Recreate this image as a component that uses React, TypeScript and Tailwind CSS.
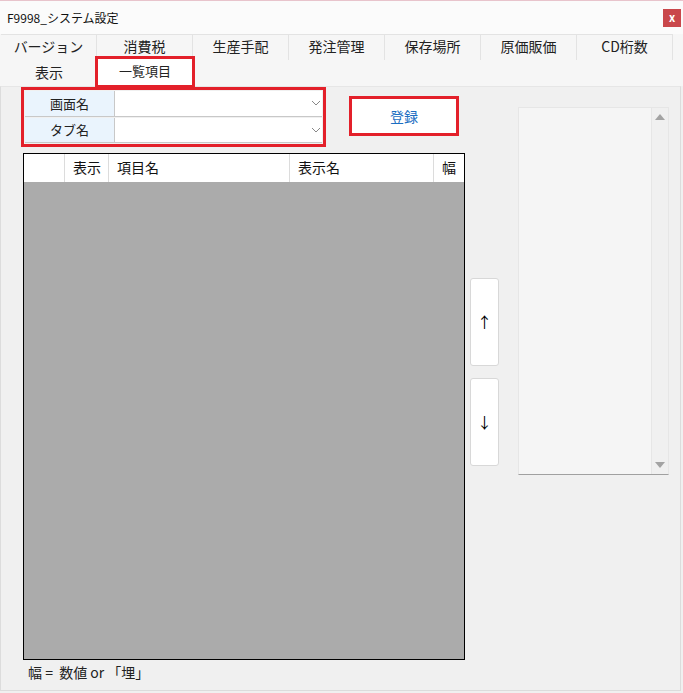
const font = { fontFamily: '"Noto Sans CJK JP", "Noto Sans", sans-serif' };

const tabsTop = ["バージョン", "消費税", "生産手配", "発注管理", "保存場所", "原価販価", "CD桁数"];

const columns = [
  { label: "", w: "w-[41px]" },
  { label: "表示", w: "w-[44px]" },
  { label: "項目名", w: "w-[181px]" },
  { label: "表示名", w: "w-[144px]" },
  { label: "幅", w: "flex-1" },
];

function Combo({ label }: { label: string }) {
  return (
    <div className="flex h-[26px]">
      <div className="w-[90px] bg-[#eaf4fd] border-r border-b border-[#c8c8c8] flex items-center justify-center text-[13px] text-[#222]">
        {label}
      </div>
      <div className="flex-1 bg-white border-b border-[#c8c8c8] flex items-center justify-end pr-[1px]">
        <svg width="10" height="6" viewBox="0 0 10 6">
          <path d="M1 1 L5 5 L9 1" fill="none" stroke="#888" strokeWidth="1" />
        </svg>
      </div>
    </div>
  );
}

function ArrowButton({ ch }: { ch: string }) {
  return (
    <div className="w-[29px] h-[88px] bg-white border border-[#d8d8d8] rounded-[3px] flex items-center justify-center text-[15px] text-black">
      {ch}
    </div>
  );
}

export default function App() {
  return (
    <div className="w-[683px] h-[693px] bg-[#f0f0f0] overflow-hidden" style={font}>
      {/* title bar */}
      <div className="h-[34px] bg-[#fbfbfb] border-t border-[#e8c4cc] flex items-center justify-between pl-[7px] pr-[2px]">
        <span className="text-[12px] text-[#111]">F9998_システム設定</span>
        <div className="w-[18px] h-[18px] bg-[#c9474b] text-white text-[11px] font-bold flex items-center justify-center leading-none">
          x
        </div>
      </div>

      {/* tabs */}
      <div className="bg-[#f6f6f6] pl-[1px]">
        <div className="flex h-[26px]">
          {tabsTop.map((t) => (
            <div
              key={t}
              className="w-[96px] border-r border-t border-[#e3e3e3] flex items-center justify-center text-[14px] text-[#222] pb-[2px]"
            >
              {t}
            </div>
          ))}
        </div>
        <div className="flex h-[26px]">
          <div className="w-[96px] flex items-center justify-center text-[14px] text-[#222] pb-[2px]">表示</div>
          <div className="relative w-[96px] bg-white flex items-center justify-center text-[13px] text-[#222] -mt-[2px] h-[28px] pb-[2px]">
            一覧項目
            <div className="absolute -left-[2px] -right-[2px] -top-[2px] -bottom-[2px] border-[3px] border-[#e3202a]" />
          </div>
        </div>
      </div>

      {/* panel */}
      <div className="h-[605px] w-[681px] border border-[#dcdcdc] border-t-[#e6e6e6] flex items-start">
        <div className="flex flex-col">
          <div className="flex items-start">
            <div className="ml-[20px] w-[305px] h-[60px] border-[3px] border-[#e3202a] p-[1px] flex flex-col gap-px">
              <Combo label="画面名" />
              <Combo label="タブ名" />
            </div>
            <div className="ml-[23px] mt-[9px] w-[110px] h-[40px] border-[3px] border-[#e3202a] bg-white flex items-center justify-center text-[14px] text-[#1b6ec2]">
              登録
            </div>
          </div>

          <div className="ml-[22px] mt-[6px] w-[442px] h-[507px] border border-black flex flex-col">
            <div className="h-[28px] bg-white flex">
              {columns.map((c, i) => (
                <div
                  key={i}
                  className={`${c.w} ${i < columns.length - 1 ? "border-r border-[#dcdcdc]" : ""} flex items-center ${
                    i === 4 ? "justify-center" : "pl-[8px]"
                  } text-[14px] text-[#111] pb-[2px]`}
                >
                  {c.label}
                </div>
              ))}
            </div>
            <div className="flex-1 bg-[#ababab]" />
          </div>

          <div className="ml-[27px] text-[14px] text-[#222] leading-[24px]">
            幅 =&nbsp;&nbsp;数値 or 「埋」
          </div>
        </div>

        <div className="ml-[5px] mt-[191px] flex flex-col gap-[12px]">
          <ArrowButton ch="↑" />
          <ArrowButton ch="↓" />
        </div>

        <div className="ml-[19px] mt-[20px] w-[151px] h-[368px] bg-[#f5f5f5] border border-[#e6e6e6] border-b-[#a0a0a0] flex">
          <div className="flex-1" />
          <div className="w-[17px] bg-[#f0f0f0] border-l border-[#e6e6e6] flex flex-col justify-between items-center py-[6px]">
            <svg width="10" height="6" viewBox="0 0 10 6">
              <path d="M0 6 L5 0 L10 6 Z" fill="#a3a3a3" />
            </svg>
            <svg width="10" height="6" viewBox="0 0 10 6">
              <path d="M0 0 L5 6 L10 0 Z" fill="#a3a3a3" />
            </svg>
          </div>
        </div>
      </div>
    </div>
  );
}
